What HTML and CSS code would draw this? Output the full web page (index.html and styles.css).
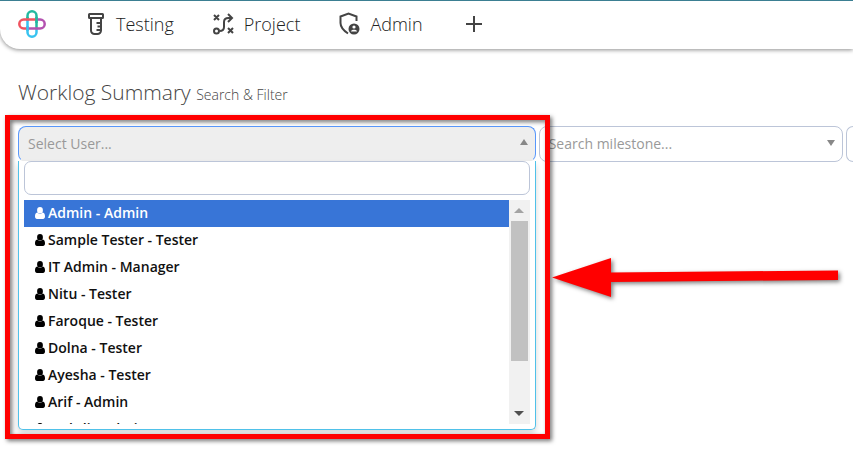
FILE: index.html
```html
<!DOCTYPE html>
<html lang="en">
<head>
<meta charset="utf-8">
<title>Worklog Summary</title>
<link rel="stylesheet" href="styles.css">
</head>
<body>
<svg class="sprite" aria-hidden="true">
  <symbol id="user" viewBox="0 0 10 12"><path d="M5 0a2.900 3.200 0 0 1 2.900 3.200A2.900 3.200 0 0 1 5 6.500 2.900 3.200 0 0 1 2.100 3.200 2.900 3.200 0 0 1 5 0zM2.200 5.600a4 4 0 0 0 5.600 0C9.400 5.900 10 7.500 10 9.600 10 11 9.200 12 8 12H2C.8 12 0 11 0 9.600 0 7.500.6 5.900 2.200 5.600z" fill="currentColor"/></symbol>
</svg>
<header class="topbar">
  <a class="logo" href="#" aria-label="Home">
    <svg width="28" height="28" viewBox="0 0 28 28" fill="none" stroke-width="2.500">
      <path d="M9.500 11V5.800a4.500 4.500 0 0 1 9 0V18" stroke="#22b9a0"/>
      <path d="M9.500 10v12.200a4.500 4.500 0 0 0 9 0V18" stroke="#38c3f0"/>
      <path d="M11 18.500h11.200a4.500 4.500 0 0 0 0-9H18" stroke="#b452b0"/>
      <path d="M18 9.500H5.800a4.500 4.500 0 0 0 0 9H11" stroke="#f0535f"/>
      <path d="M18.500 7v6M9.500 7v1" stroke="#22b9a0"/>
      <path d="M9.500 16v5" stroke="#38c3f0"/>
    </svg>
  </a>
  <nav class="menu">
    <a class="item testing" href="#">
      <svg width="16" height="24" viewBox="0 0 16 24" fill="none" stroke="currentColor" stroke-width="2"><rect x="1" y="2" width="14" height="4" rx=".5"/><path d="M3 6v12.500a3.500 3.500 0 0 0 3.500 3.500h3a3.500 3.500 0 0 0 3.500-3.500V6M8.500 11H13M9.500 14.500H13M8.500 18H13"/></svg>
      <span>Testing</span>
    </a>
    <a class="item project" href="#">
      <svg width="21" height="22" viewBox="0 0 21 22" fill="none" stroke="currentColor" stroke-width="2"><path d="M1 2l5 5M6 2L1 7M15 15l5 5M20 15l-5 5M15 1l4 4-4 4M19 5h-3.500C12 5 11 6.500 11 9v5c0 3-1.500 4-4.500 4"/><circle cx="3.500" cy="18" r="2.500"/></svg>
      <span>Project</span>
    </a>
    <a class="item admin" href="#">
      <svg width="21" height="24" viewBox="0 0 21 24"><path d="M9 21.500C4.500 18.500 1.500 15 1.500 11V4.500L9.500 1.500l8 3V9" fill="none" stroke="currentColor" stroke-width="2"/><circle cx="15" cy="17" r="5.500" fill="currentColor"/><circle cx="15" cy="15" r="1.600" fill="#fff"/><path d="M12 19.500c0-2.500 6-2.500 6 0z" fill="#fff"/></svg>
      <span>Admin</span>
    </a>
    <button class="add" type="button" aria-label="Add">
      <svg width="16" height="16" viewBox="0 0 16 16" stroke="currentColor" stroke-width="2"><path d="M8 0v16M0 8h16"/></svg>
    </button>
  </nav>
</header>
<main>
  <h1>Worklog Summary <small>Search &amp; Filter</small></h1>
  <form class="filters">
    <div class="field open">
      <button class="control" type="button" aria-haspopup="listbox" aria-expanded="true">Select User...</button>
      <div class="dropdown">
        <input class="search" type="search" aria-label="Search users">
        <div class="results">
          <ul class="options" role="listbox" aria-label="Users">
            <li role="option" aria-selected="true"><svg><use href="#user"/></svg>Admin - Admin</li>
            <li role="option"><svg><use href="#user"/></svg>Sample Tester - Tester</li>
            <li role="option"><svg><use href="#user"/></svg>IT Admin - Manager</li>
            <li role="option"><svg><use href="#user"/></svg>Nitu - Tester</li>
            <li role="option"><svg><use href="#user"/></svg>Faroque - Tester</li>
            <li role="option"><svg><use href="#user"/></svg>Dolna - Tester</li>
            <li role="option"><svg><use href="#user"/></svg>Ayesha - Tester</li>
            <li role="option"><svg><use href="#user"/></svg>Arif - Admin</li>
            <li role="option"><svg><use href="#user"/></svg>Mahdi - Admin</li>
          </ul>
          <div class="scrollbar" aria-hidden="true">
            <span class="arrow up"></span>
            <span class="track"><span class="thumb"></span></span>
            <span class="arrow down"></span>
          </div>
        </div>
      </div>
    </div>
    <div class="field">
      <select class="control" aria-label="Milestone"><option>Search milestone...</option></select>
    </div>
    <div class="field clipped">
      <select class="control" aria-label="Status"><option></option></select>
    </div>
  </form>
</main>
<div class="highlight" aria-hidden="true"></div>
<svg class="pointer" width="300" height="50" viewBox="0 0 300 50" aria-hidden="true"><path d="M2 22.500L61 3v14.500l227-2v9.500l-227 2v15z" fill="#f00"/></svg>
</body>
</html>
```

FILE: styles.css
```css
* { box-sizing: border-box; }
body {
  margin: 0;
  min-height: 100vh;
  overflow: hidden;
  position: relative;
  background: #fff;
  color: #444;
  font: 14px/20px "Open Sans", "Noto Sans", sans-serif;
}
.sprite { position: absolute; width: 0; height: 0; }
.topbar {
  display: flex;
  align-items: center;
  height: 49px;
  padding: 0 18px 3px;
  border-top: 1px solid #3b7f92;
  border-bottom-left-radius: 20px;
  box-shadow: 0 1px 4px rgba(0, 0, 0, .45);
}
.logo { display: flex; margin-right: 42px; }
.menu { display: flex; align-items: center; gap: 39px; }
.item {
  display: flex;
  align-items: center;
  gap: 10px;
  color: #222;
  font-size: 18px;
  line-height: 24px;
  font-weight: 300;
  text-decoration: none;
}
.item svg { color: #444; }
.testing { gap: 12px; }
.add { display: flex; padding: 4px; border: 0; background: none; color: #444; }
main { padding: 27px 0 0 18px; }
h1 {
  margin: 0 0 18px;
  font-size: 21px;
  line-height: 32px;
  font-weight: 300;
}
h1 small { font-size: 14px; color: #444; }
.filters {
  display: grid;
  grid-template-columns: 62% 36.4% 1fr;
  gap: 3px;
  margin-top: -3px;
}
h1 { margin-bottom: 18px; }
.field { position: relative; height: 36px; }
.control {
  display: block;
  width: 100%;
  height: 36px;
  padding: 0 9px;
  border: 1px solid #bcc5d8;
  border-radius: 8px;
  background: #fff;
  color: #999;
  font: inherit;
  text-align: left;
  appearance: none;
}
.field::after {
  content: "";
  position: absolute;
  top: 14px;
  right: 8px;
  border: 4px solid transparent;
  border-top: 6px solid #888;
  border-bottom: 0;
}
.clipped { min-width: 0; overflow: hidden; }
.clipped .control { border-right: 0; border-radius: 8px 0 0 8px; padding: 0; }
.clipped::after { content: none; }
.open .control {
  background: #eee;
  border-color: #5897fb;
  border-bottom-color: #eee;
}
.open::after { top: 13px; border-top: 0; border-bottom: 6px solid #888; }
.dropdown {
  position: absolute;
  top: 35px;
  left: 0;
  right: 0;
  padding: 0 5px 5px;
  border: 1px solid #4fc1e9;
  border-top: 0;
  border-radius: 0 0 5px 5px;
  background: #fff;
  box-shadow: 0 4px 6px rgba(0, 0, 0, .16);
}
.search {
  display: block;
  width: 100%;
  height: 34px;
  margin-bottom: 5px;
  border: 1px solid #bcc5d8;
  border-radius: 7px;
  background: #fff;
}
.results { display: flex; height: 224px; }
.options {
  flex: 1;
  margin: 0;
  padding: 0;
  overflow: hidden;
  list-style: none;
  color: #111;
  font-weight: 600;
}
.options li {
  display: flex;
  align-items: center;
  gap: 3px;
  height: 27px;
  padding: 0 11px 1px;
}
.options svg { width: 10px; height: 12px; color: #000; }
.options [aria-selected="true"] { background: #3875d7; color: #fff; }
.options [aria-selected="true"] svg { color: #fff; }
.scrollbar { display: flex; flex-direction: column; width: 21px; background: #f1f1f1; }
.arrow { display: grid; place-items: center; height: 21px; }
.arrow::before { content: ""; border: 5px solid transparent; }
.up::before { border-top: 0; border-bottom-color: #a3a3a3; }
.down::before { border-bottom: 0; border-top-color: #505050; }
.track { flex: 1; padding: 0 2px; }
.thumb { display: block; height: 77%; background: #c1c1c1; }
.highlight {
  position: absolute;
  left: 5px;
  top: 115px;
  width: 545px;
  height: 324px;
  border: 5px solid #f00;
  filter: drop-shadow(2px 2px 2px rgba(0, 0, 0, .55));
}
.pointer {
  position: absolute;
  left: 550px;
  top: 255px;
  filter: drop-shadow(2px 2px 2px rgba(0, 0, 0, .5));
}
```
